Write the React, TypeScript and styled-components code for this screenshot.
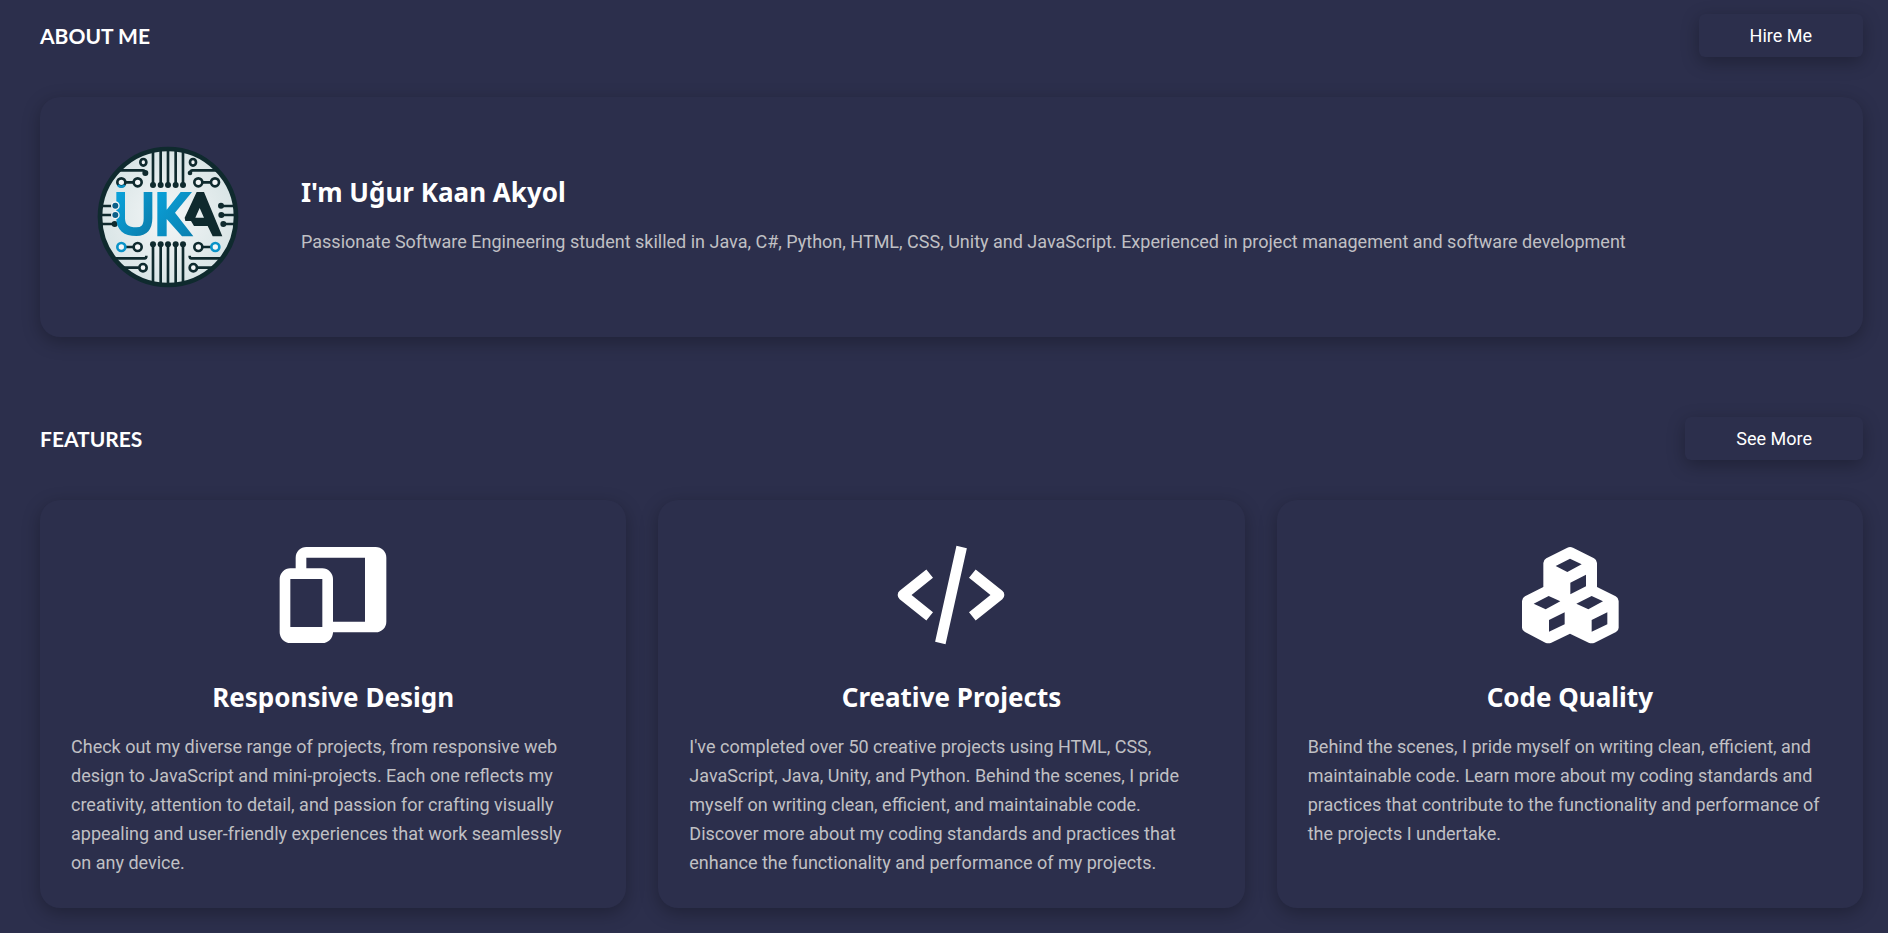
import React from "react";
import styled, { createGlobalStyle } from "styled-components";

const BODY_FONT = `Roboto, "Liberation Sans", sans-serif`;
const HEADING_FONT = `Lato, "Liberation Sans", sans-serif`;
const TITLE_FONT = `"Noto Sans", "Open Sans", sans-serif`;
const SURFACE = "#2c2f4c";
const SHADOW = "0 5px 18px rgba(0, 0, 0, 0.28)";

const GlobalStyle = createGlobalStyle`
  *, *::before, *::after { box-sizing: border-box; }
  body {
    margin: 0;
    background: ${SURFACE};
    color: #ffffff;
    font-family: ${BODY_FONT};
    font-size: 18px;
    line-height: 29px;
  }
  h2, h3, p { margin: 0; }
`;

const Page = styled.main`
  display: flex;
  flex-direction: column;
  gap: 80px;
  padding: 14px 25px 25px 40px;
`;

const Section = styled.section`
  display: flex;
  flex-direction: column;
  gap: 40px;
`;

const SectionHeader = styled.header`
  display: flex;
  align-items: center;
  justify-content: space-between;
`;

const SectionTitle = styled.h2`
  font-family: ${HEADING_FONT};
  font-size: 21px;
  line-height: 28px;
  font-weight: 700;
  text-transform: uppercase;
`;

const ActionButton = styled.button`
  height: 43px;
  padding: 0 51px;
  border: 0;
  border-radius: 6px;
  background: ${SURFACE};
  box-shadow: ${SHADOW};
  color: #ffffff;
  font: inherit;
  cursor: pointer;
`;

const Card = styled.article`
  border-radius: 20px;
  background: ${SURFACE};
  box-shadow: ${SHADOW};
`;

const AboutCard = styled(Card)`
  display: flex;
  align-items: center;
  gap: 62px;
  padding: 48px 57px;
`;

const Logo = styled.svg`
  flex: none;
  width: 142px;
  height: 144px;
`;

const CardTitle = styled.h3`
  margin-bottom: 16px;
  font-family: ${TITLE_FONT};
  font-size: 26px;
  line-height: 38px;
  font-weight: 700;
`;

const CardText = styled.p`
  margin-bottom: 6px;
  color: #c0c0c4;
`;

const FeatureGrid = styled.div`
  display: grid;
  grid-template-columns: repeat(3, 1fr);
  gap: 32px;
`;

const FeatureCard = styled(Card)`
  display: flex;
  flex-direction: column;
  padding: 31px 31px 25px;

  ${CardTitle} { text-align: center; }
`;

const FeatureIcon = styled.svg`
  align-self: center;
  width: 128px;
  height: 128px;
  margin-bottom: 19px;
  fill: #ffffff;
`;

const INK = "#0f2a2e";
const BLUE = "#0a93c8";

function UkaLogo() {
  return (
    <Logo viewBox="35 30 426 432" role="img" aria-label="UKA logo">
      <defs>
        <radialGradient id="face">
          <stop offset="0" stopColor="#f4f6f7" />
          <stop offset="1" stopColor="#d9e5e6" />
        </radialGradient>
        <linearGradient id="blue" x1="0" x2="1" y1="0" y2="1">
          <stop offset="0" stopColor="#0aa0d8" />
          <stop offset="1" stopColor="#0b80b0" />
        </linearGradient>
        <clipPath id="disc">
          <circle cx="248" cy="246" r="202" />
        </clipPath>
      </defs>
      <circle cx="248" cy="246" r="204" fill="url(#face)" stroke={INK} strokeWidth="14" />
      <g clipPath="url(#disc)" fill="none" stroke={INK} strokeWidth="8">
        {[203, 226, 248, 271, 293].map((x) => (
          <g key={x}>
            <path d={`M${x} 36V150M${x} 328V456`} />
            <circle cx={x} cy="150" r="9" fill={INK} stroke="none" />
            <circle cx={x} cy="328" r="9" fill={INK} stroke="none" />
          </g>
        ))}
        <path d="M90 106H172q8 0 8 10M406 106H322q-8 0-8 10M90 370H178q5 0 5-8M406 370H318q-5 0-5-8" />
        <path d="M100 398H160M396 398H336M120 142H146M350 142H378M120 336H146M350 336H378" />
        <path d="M40 213H88M40 240H88M40 267H88M456 213H408M456 240H408M456 267H414" />
      </g>
      <g fill={INK}>
        <circle cx="180" cy="114" r="9" />
        <circle cx="314" cy="114" r="7" />
        <circle cx="88" cy="267" r="9" />
        <circle cx="407" cy="212" r="9" />
        <circle cx="408" cy="240" r="9" />
        <circle cx="414" cy="267" r="9" />
      </g>
      <g fill="#f4f6f7" stroke={INK} strokeWidth="8">
        <ellipse cx="174" cy="82" rx="9" ry="10" />
        <ellipse cx="323" cy="82" rx="9" ry="10" />
        <circle cx="157" cy="142" r="12" />
        <circle cx="339" cy="142" r="12" />
        <circle cx="389" cy="142" r="12" />
        <circle cx="157" cy="336" r="12" />
        <circle cx="339" cy="336" r="12" />
        <circle cx="173" cy="398" r="11" />
        <circle cx="324" cy="398" r="11" />
        <circle cx="108" cy="142" r="12" />
        <circle cx="108" cy="336" r="12" stroke={BLUE} />
        <circle cx="390" cy="336" r="12" stroke={BLUE} />
      </g>
      <path d="M98 150A12 12 0 0 0 118 150" fill="none" stroke={BLUE} strokeWidth="8" />
      <path
        d="M106 171V250Q106 290 153 290Q188 290 188 250V171"
        fill="none"
        stroke="url(#blue)"
        strokeWidth="26"
      />
      <path
        d="M216 171H244V224L286 171H320L269 233L324 304H290L244 252V304H216Z"
        fill="url(#blue)"
      />
      <path
        d="M334 171H356L411 304H382L367 273H326L317 258H300L298 248ZM343 219L330 248H356Z"
        fill={INK}
        fillRule="evenodd"
      />
      <g fill="#0b5f88" stroke="#f4f6f7" strokeWidth="4">
        <circle cx="90" cy="212" r="11" />
        <circle cx="90" cy="240" r="11" />
      </g>
    </Logo>
  );
}

function DevicesIcon() {
  return (
    <FeatureIcon viewBox="0 0 24 24" aria-hidden="true">
      <path
        fillRule="evenodd"
        d="M5 7V5a2 2 0 0 1 2-2h13a2 2 0 0 1 2 2v12a2 2 0 0 1-2 2h-8a2 2 0 0 1-2 2H4a2 2 0 0 1-2-2V9a2 2 0 0 1 2-2zM7 7h3a2 2 0 0 1 2 2v8h6V5H7zM4 9v9h6V9z"
      />
    </FeatureIcon>
  );
}

function CodeIcon() {
  return (
    <FeatureIcon viewBox="0 0 24 24" aria-hidden="true">
      <path d="m7.375 16.781 1.25-1.562L4.601 12l4.024-3.219-1.25-1.562-5 4a1 1 0 0 0 0 1.562l5 4zm9.25-9.562-1.25 1.562L19.399 12l-4.024 3.219 1.25 1.562 5-4a1 1 0 0 0 0-1.562l-5-4zM14.976 3.216l-4 18-1.953-.434 4-18z" />
    </FeatureIcon>
  );
}

function CubesIcon() {
  return (
    <FeatureIcon viewBox="17 2 384 384" aria-hidden="true">
      <path
        fillRule="evenodd"
        d="M201 52Q209 48 218 52L281 84Q290 89 290 98V170L346 198Q355 203 355 212V292Q355 300 347 305L283 337Q274 341 265 337L209 310L153 337Q144 341 135 337L74 305Q65 300 65 292V212Q65 203 74 198L129 170V98Q129 89 138 84Z
          M166 107L201 125L244 102L209 85ZM210 157V192L257 168V133Z
          M100 220L136 237L180 213L145 197ZM146 269V304L193 282V246Z
          M228 220L264 237L308 213L274 197ZM274 269V304L321 282V246Z"
      />
    </FeatureIcon>
  );
}

const features = [
  {
    title: "Responsive Design",
    Icon: DevicesIcon,
    text: "Check out my diverse range of projects, from responsive web design to JavaScript and mini-projects. Each one reflects my creativity, attention to detail, and passion for crafting visually appealing and user-friendly experiences that work seamlessly on\u00a0any device.",
  },
  {
    title: "Creative Projects",
    Icon: CodeIcon,
    text: "I've completed over 50 creative projects using HTML, CSS, JavaScript, Java, Unity, and Python. Behind the scenes, I pride myself on writing clean, efficient, and maintainable code. Discover more about my coding standards and practices that enhance the functionality and performance of my projects.",
  },
  {
    title: "Code Quality",
    Icon: CubesIcon,
    text: "Behind the scenes, I pride myself on writing clean, efficient, and maintainable code. Learn more about my coding standards and practices that contribute to the functionality and performance of the projects I undertake.",
  },
];

export default function App() {
  return (
    <>
      <GlobalStyle />
      <Page>
        <Section>
          <SectionHeader>
            <SectionTitle>About Me</SectionTitle>
            <ActionButton type="button">Hire Me</ActionButton>
          </SectionHeader>
          <AboutCard>
            <UkaLogo />
            <div>
              <CardTitle>I'm Uğur Kaan Akyol</CardTitle>
              <CardText>
                Passionate Software Engineering student skilled in Java, C#, Python, HTML, CSS,
                Unity and JavaScript. Experienced in project management and software development
              </CardText>
            </div>
          </AboutCard>
        </Section>
        <Section>
          <SectionHeader>
            <SectionTitle>Features</SectionTitle>
            <ActionButton type="button">See More</ActionButton>
          </SectionHeader>
          <FeatureGrid>
            {features.map(({ title, Icon, text }) => (
              <FeatureCard key={title}>
                <Icon />
                <CardTitle>{title}</CardTitle>
                <CardText>{text}</CardText>
              </FeatureCard>
            ))}
          </FeatureGrid>
        </Section>
      </Page>
    </>
  );
}
